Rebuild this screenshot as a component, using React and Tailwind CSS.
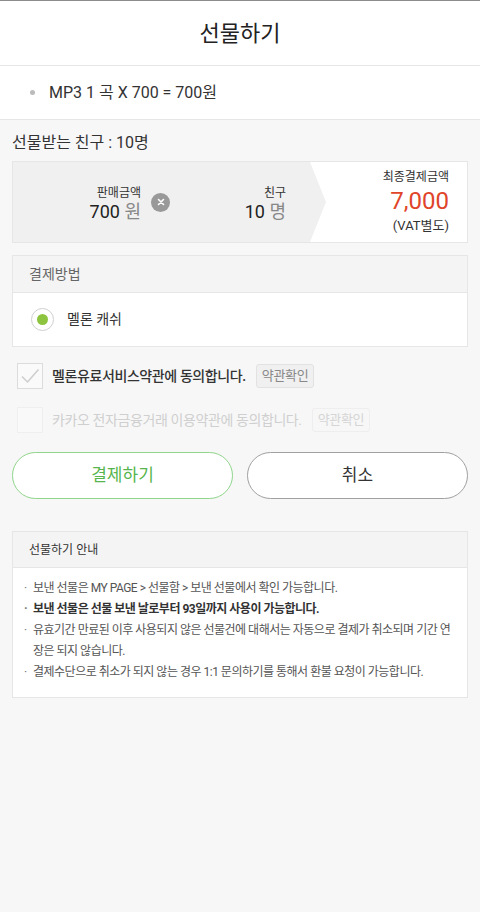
import React from 'react';

const font = { fontFamily: 'Roboto, "Noto Sans CJK KR", sans-serif' };

function Check({ faded }) {
  return (
    <div
      className={`w-[26px] h-[26px] flex items-center justify-center border ${
        faded ? 'border-[#efefef] bg-[#f9f9f9]' : 'border-[#dcdcdc] bg-[#fafafa]'
      }`}
    >
      {!faded && (
        <svg width="22" height="22" viewBox="0 0 22 22" fill="none">
          <path d="M3 11.5 L8.5 17 L19.5 4.5" stroke="#cfcfcf" strokeWidth="1.6" strokeLinejoin="round" />
        </svg>
      )}
    </div>
  );
}

export default function App() {
  const notices = [
    { text: '보낸 선물은 MY PAGE > 선물함 > 보낸 선물에서 확인 가능합니다.' },
    { text: '보낸 선물은 선물 보낸 날로부터 93일까지 사용이 가능합니다.', bold: true },
    { text: '유효기간 만료된 이후 사용되지 않은 선물건에 대해서는 자동으로 결제가 취소되며 기간 연장은 되지 않습니다.' },
    { text: '결제수단으로 취소가 되지 않는 경우 1:1 문의하기를 통해서 환불 요청이 가능합니다.' },
  ];

  return (
    <div style={font} className="w-full min-h-[912px] bg-[#f7f7f7] border-t border-[#8c8c8c] text-[#333]">
      {/* Header */}
      <header className="h-[65px] bg-white border-b border-[#e6e6e6] flex items-center justify-center">
        <h1 className="text-[22px] text-[#222] leading-none pt-[1px]">선물하기</h1>
      </header>

      {/* Item */}
      <div className="h-[54px] bg-white border-b border-[#e6e6e6] flex items-center pl-[30px]">
        <span className="w-[5px] h-[5px] rounded-full bg-[#bbb] mr-[14px]" />
        <span className="text-[16px] text-[#333] pt-[1px]">MP3 1 곡 X 700 = 700원</span>
      </div>

      <div className="px-3">
        <div className="pt-[12px] h-[41px] text-[16px] text-[#333] leading-[22px]">선물받는 친구 : 10명</div>

        {/* Summary */}
        <div className="h-[82px] flex border border-[#e6e6e6] bg-white">
          <div className="w-[313px] bg-[#f0f0f0] flex items-center [clip-path:polygon(0_0,calc(100%-16px)_0,100%_50%,calc(100%-16px)_100%,0_100%)]">
            <div className="w-[128px] text-right pt-[4px]">
              <div className="text-[12px] text-[#333] leading-[16px]">판매금액</div>
              <div className="text-[18px] text-[#222] leading-[22px]">
                700 <span className="text-[#888]">원</span>
              </div>
            </div>
            <div className="ml-[10px] w-[19px] h-[19px] rounded-full bg-[#999] flex items-center justify-center">
              <svg width="8" height="8" viewBox="0 0 8 8">
                <path d="M1.5 1.5 L6.5 6.5 M6.5 1.5 L1.5 6.5" stroke="#fff" strokeWidth="1.6" strokeLinecap="round" />
              </svg>
            </div>
            <div className="w-[116px] text-right pt-[4px]">
              <div className="text-[12px] text-[#333] leading-[16px]">친구</div>
              <div className="text-[18px] text-[#222] leading-[22px]">
                10 <span className="text-[#888]">명</span>
              </div>
            </div>
          </div>
          <div className="flex-1 flex flex-col items-end justify-center pr-[18px]">
            <div className="text-[12px] text-[#333] leading-[16px]">최종결제금액</div>
            <div className="text-[24px] text-[#e0452a] leading-[32px]">7,000</div>
            <div className="text-[13px] text-[#333] leading-[18px]">(VAT별도)</div>
          </div>
        </div>

        {/* Payment method */}
        <div className="mt-[12px] border border-[#e6e6e6] bg-white">
          <div className="h-[37px] bg-[#f4f4f4] border-b border-[#e6e6e6] flex items-center pl-[16px] text-[14px] text-[#666]">
            결제방법
          </div>
          <div className="h-[53px] flex items-center pl-[18px]">
            <div className="w-[23px] h-[23px] rounded-full border border-[#cfcfcf] bg-white flex items-center justify-center">
              <div className="w-[11px] h-[11px] rounded-full bg-[#8cc43f]" />
            </div>
            <span className="ml-[13px] text-[14px] text-[#333]">멜론 캐쉬</span>
          </div>
        </div>

        {/* Terms */}
        <div className="mt-[16px] pl-[5px] flex items-center">
          <Check />
          <span className="ml-[9px] text-[14px] font-medium tracking-[-0.4px] text-[#333]">멜론유료서비스약관에 동의합니다.</span>
          <span className="ml-[10px] h-[24px] px-[5px] flex items-center text-[13px] tracking-[-0.3px] text-[#888] bg-[#f0f0f0] border border-[#e2e2e2] rounded-[3px]">
            약관확인
          </span>
        </div>
        <div className="mt-[18px] pl-[5px] flex items-center">
          <Check faded />
          <span className="ml-[9px] text-[14px] tracking-[-0.4px] text-[#cfcfcf]">카카오 전자금융거래 이용약관에 동의합니다.</span>
          <span className="ml-[10px] h-[24px] px-[5px] flex items-center text-[13px] tracking-[-0.3px] text-[#d5d5d5] bg-[#f7f7f7] border border-[#eeeeee] rounded-[3px]">
            약관확인
          </span>
        </div>

        {/* Buttons */}
        <div className="mt-[19px] flex gap-[14px]">
          <button className="flex-1 h-[47px] rounded-full border border-[#8fd58b] bg-white text-[17px] text-[#56b54c]">
            결제하기
          </button>
          <button className="flex-1 h-[47px] rounded-full border border-[#a0a0a0] bg-white text-[17px] text-[#333]">
            취소
          </button>
        </div>

        {/* Notice */}
        <div className="mt-[32px] border border-[#e6e6e6] bg-white">
          <div className="h-[36px] bg-[#f4f4f4] border-b border-[#e6e6e6] flex items-center pl-[16px] text-[12px] text-[#333]">
            선물하기 안내
          </div>
          <ul className="pt-[10px] pb-[14px] pl-[11px] pr-[10px] text-[12px] leading-[21px] tracking-[-0.5px] text-[#555]">
            {notices.map((n, i) => (
              <li key={i} className={`flex ${n.bold ? 'font-bold text-[#333]' : ''}`}>
                <span className="w-[9px] shrink-0 text-[#777]">·</span>
                <span className="break-all">{n.text}</span>
              </li>
            ))}
          </ul>
        </div>
      </div>
    </div>
  );
}
